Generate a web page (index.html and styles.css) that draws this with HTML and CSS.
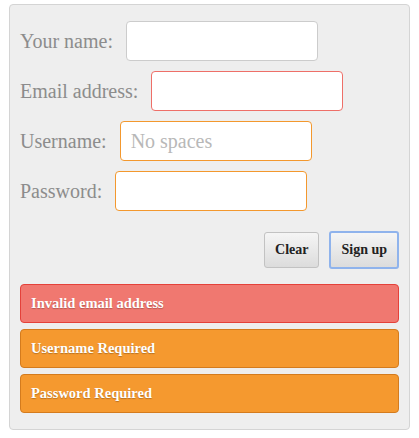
FILE: index.html
```html
<!DOCTYPE html>
<html>
<head>
<meta charset="utf-8">
<link rel="stylesheet" href="styles.css">
</head>
<body>
<div class="panel">
  <form class="signup">
    <div class="row"><label class="lbl">Your name:</label><input class="field" type="text"></div>
    <div class="row"><label class="lbl">Email address:</label><input class="field invalid" type="text"></div>
    <div class="row"><label class="lbl">Username:</label><input class="field warn" type="text" placeholder="No spaces"></div>
    <div class="row"><label class="lbl">Password:</label><input class="field warn" type="password"></div>
    <div class="actions">
      <button type="button" class="btn">Clear</button>
      <button type="button" class="btn primary">Sign up</button>
    </div>
  </form>
  <div class="alerts">
    <div class="alert error">Invalid email address</div>
    <div class="alert warning">Username Required</div>
    <div class="alert warning">Password Required</div>
  </div>
</div>
</body>
</html>
```
FILE: styles.css
```css
html, body {
  margin: 0;
  padding: 0;
  background: #ffffff;
}
body {
  padding: 4px 0 0 9px;
  font-family: "Liberation Serif", "DejaVu Serif", serif;
}
.panel {
  box-sizing: border-box;
  width: 401px;
  height: 426px;
  background: #eeeeee;
  border: 1px solid #d4d4d4;
  border-radius: 4px;
  padding: 16px 10px 0 10px;
}
.signup {
  display: flex;
  flex-direction: column;
  gap: 10px;
}
.row {
  display: flex;
  align-items: center;
  height: 40px;
}
.lbl {
  font-size: 20px;
  color: #8c8c8c;
  margin-right: 13px;
}
.field {
  box-sizing: border-box;
  width: 192px;
  height: 40px;
  border: 1px solid #cccccc;
  border-radius: 4px;
  background: #ffffff;
  padding: 0 10px;
  font-family: inherit;
  font-size: 20px;
  outline: none;
}
.field::placeholder {
  color: #b8b8b8;
}
.field.invalid {
  border-color: #ee6f68;
}
.field.warn {
  border-color: #f3982e;
}
.actions {
  display: flex;
  justify-content: flex-end;
  align-items: center;
  gap: 10px;
  margin-top: 10px;
  height: 38px;
}
.btn {
  box-sizing: border-box;
  height: 36px;
  padding: 0 10px;
  border: 1px solid #c2c2c2;
  border-radius: 3px;
  background: linear-gradient(#f5f5f5, #dcdcdc);
  font-family: inherit;
  font-weight: bold;
  font-size: 14px;
  color: #222222;
}
.btn.primary {
  height: 38px;
  padding: 0 10px;
  border: 2px solid #8fb3ec;
}
.alerts {
  display: flex;
  flex-direction: column;
  gap: 6px;
  margin-top: 15px;
}
.alert {
  box-sizing: border-box;
  height: 39px;
  border-radius: 4px;
  padding: 0 10px;
  display: flex;
  align-items: center;
  color: #ffffff;
  font-weight: bold;
  font-size: 14.5px;
  text-shadow: 0 1px 1px rgba(0,0,0,0.25);
}
.alert.error {
  background: #f07870;
  border: 1px solid #e4413a;
}
.alert.warning {
  background: #f5992f;
  border: 1px solid #d47b1d;
}
```
